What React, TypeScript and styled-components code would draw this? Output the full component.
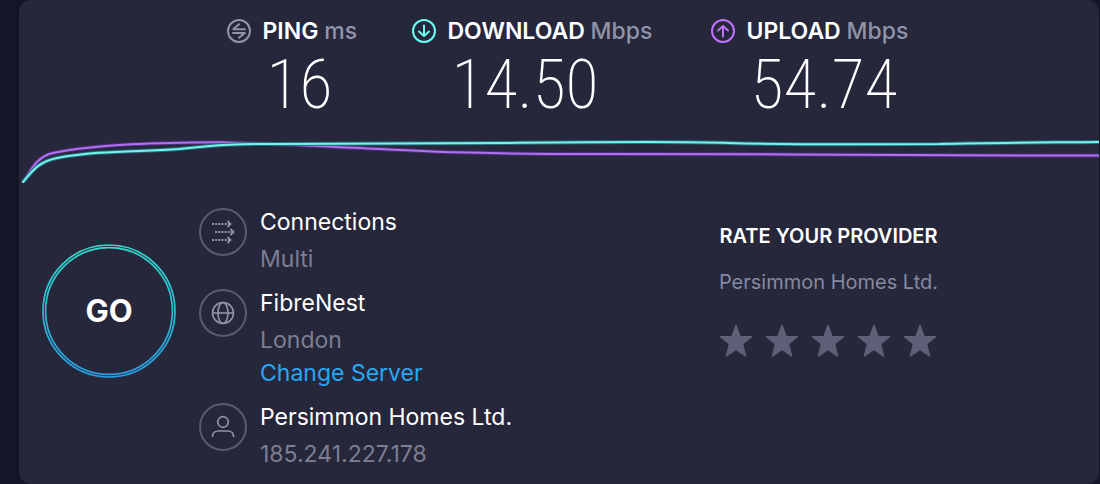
import React from 'react';
import styled, { createGlobalStyle } from 'styled-components';

const GlobalStyle = createGlobalStyle`
  * { box-sizing: border-box; }
  body {
    margin: 0;
    background: #141526;
    font-family: Inter, "Liberation Sans", sans-serif;
    color: #ffffff;
  }
`;

const Page = styled.main`
  min-height: 100vh;
  display: flex;
  padding: 0 1px 0 19px;
`;

const Card = styled.section`
  flex: 1;
  min-width: 0;
  background: #26273b;
  border-radius: 12px;
`;

const Metrics = styled.div`
  display: grid;
  grid-template-columns: 185px 299px 200px;
  justify-content: center;
  padding: 16px 0 0 19px;
`;

const Metric = styled.div`
  display: grid;
  grid-template-columns: 24px auto;
  justify-content: start;
  align-items: center;
  column-gap: 12px;
`;

const MetricLabel = styled.h2`
  margin: 0;
  font-size: 23px;
  line-height: 30px;
  font-weight: 600;
  white-space: nowrap;
`;

const Unit = styled.span`
  color: #9193a8;
  font-weight: 500;
`;

const MetricValue = styled.div`
  grid-column: 2;
  padding-left: 4px;
  font-family: "Roboto Condensed", Roboto, sans-serif;
  font-size: 68px;
  line-height: 78px;
  font-weight: 200;
`;

const Chart = styled.svg`
  display: block;
  width: 100%;
  height: 60px;
`;

const Details = styled.div`
  display: grid;
  grid-template-columns: 134px 376px 1fr;
  padding: 24px 20px 16px 23px;
  column-gap: 23px;
`;

const GoButton = styled.button`
  display: grid;
  place-items: center;
  width: 134px;
  height: 134px;
  margin-top: 36px;
  padding: 0;
  border: 0;
  border-radius: 50%;
  background: none;
  color: #ffffff;
  font: 700 31px/36px Inter, sans-serif;
  cursor: pointer;

  > * { grid-area: 1 / 1; }
`;

const InfoList = styled.div`
  display: flex;
  flex-direction: column;
  gap: 16px;
`;

const InfoItem = styled.div`
  display: flex;
  gap: 13px;
`;

const InfoIcon = styled.svg`
  flex: none;
  width: 48px;
  height: 48px;
  fill: none;
  stroke: #9193a8;
`;

const InfoText = styled.div`
  font-size: 23px;
  line-height: 28px;
`;

const InfoTitle = styled.div``;

const InfoSub = styled.div`
  margin-top: 9px;
  color: #7d7e93;
`;

const ServerLink = styled.a`
  display: block;
  margin-top: 5px;
  color: #26a8f5;
  text-decoration: none;
`;

const Rating = styled.fieldset`
  justify-self: center;
  margin: 0 20px 0 0;
  padding: 16px 0 0;
  border: 0;
  text-align: center;
`;

const RatingTitle = styled.h3`
  margin: 0;
  font-size: 20px;
  line-height: 24px;
  font-weight: 600;
`;

const Provider = styled.p`
  margin: 22px 0 0;
  font-size: 20px;
  line-height: 24px;
  color: #8789a0;
`;

const Stars = styled.div`
  display: flex;
  justify-content: center;
  gap: 12px;
  margin-top: 30px;
`;

const Star = styled.button`
  width: 34px;
  height: 34px;
  padding: 0;
  border: 0;
  background: none;
  cursor: pointer;

  svg { display: block; }
`;

type Kind = 'ping' | 'download' | 'upload';

const metricShape: Record<Kind, { color: string; path: string }> = {
  ping: { color: '#9193a8', path: 'M12 5.2 L6.2 10.2 H18 M6 14 H17.8 L12 18.800' },
  download: { color: '#6afff3', path: 'M12 6.5 V17 M7 12.5 L12 17 L17 12.5' },
  upload: { color: '#bf71ff', path: 'M12 17.5 V7 M7 11.5 L12 7 L17 11.5' },
};

const MetricIcon = ({ kind }: { kind: Kind }) => (
  <svg width="24" height="24" viewBox="0 0 24 24" fill="none" stroke={metricShape[kind].color} strokeWidth="2" strokeLinejoin="round" strokeLinecap="round" aria-hidden="true">
    <circle cx="12" cy="12" r="11" />
    <path d={metricShape[kind].path} />
  </svg>
);

const metrics: { kind: Kind; label: string; unit: string; value: string }[] = [
  { kind: 'ping', label: 'PING', unit: 'ms', value: '16' },
  { kind: 'download', label: 'DOWNLOAD', unit: 'Mbps', value: '14.50' },
  { kind: 'upload', label: 'UPLOAD', unit: 'Mbps', value: '54.74' },
];

const uploadLine =
  'M4 58 C11 49 16 33 34 29 C80 20 140 18.5 200 18.2 C250 19 300 22.5 361 25 C400 27 420 28 436 28.3 C500 30 540 30 580 30 C700 30.3 900 30.5 1000 31.5 L1080 31.5';
const downloadLine =
  'M4 58 C12 49 18 38 38 34 C80 26 120 28 160 25 C200 21 220 19.5 260 20 C340 19 420 19.5 480 19 C580 18 660 17 710 19 C780 21 850 20 920 20 C980 18.5 1040 18.5 1080 18';

const Ring = () => (
  <circle cx="24" cy="24" r="23" stroke="#5a5b70" strokeWidth="2" />
);

export default function App() {
  return (
    <>
      <GlobalStyle />
      <Page>
        <Card>
          <Metrics>
            {metrics.map((m) => (
              <Metric key={m.kind}>
                <MetricIcon kind={m.kind} />
                <MetricLabel>
                  {m.label} <Unit>{m.unit}</Unit>
                </MetricLabel>
                <MetricValue>{m.value}</MetricValue>
              </Metric>
            ))}
          </Metrics>

          <Chart viewBox="0 0 1080 60" preserveAspectRatio="none" fill="none" aria-hidden="true">
            <path d={uploadLine} stroke="#4b2f78" strokeWidth="4" />
            <path d={uploadLine} stroke="#b070f0" strokeWidth="2" />
            <path d={downloadLine} stroke="#2a6a78" strokeWidth="4" />
            <path d={downloadLine} stroke="#72f5ee" strokeWidth="2" strokeLinecap="round" />
          </Chart>

          <Details>
            <GoButton type="button">
              <svg width="134" height="134" viewBox="0 0 134 134" fill="none" aria-hidden="true">
                <defs>
                  <linearGradient id="ring" x1="0" y1="0" x2="0" y2="1">
                    <stop offset="0" stopColor="#32d8c8" />
                    <stop offset="1" stopColor="#2a9ade" />
                  </linearGradient>
                </defs>
                <circle cx="67" cy="67" r="66" stroke="url(#ring)" strokeWidth="1.7" />
                <circle cx="67" cy="67" r="63.4" stroke="url(#ring)" strokeWidth="1.7" />
              </svg>
              <span>GO</span>
            </GoButton>

            <InfoList>
              <InfoItem>
                <InfoIcon viewBox="0 0 48 48" aria-hidden="true">
                  <Ring />
                  <g strokeWidth="1.8">
                    <path d="M13 16 H31 M16 24 H34 M13 32 H31" strokeDasharray="2 1.2" />
                    <path d="M28.5 13 L31.5 16 L28.5 19 M31.5 21 L34.5 24 L31.5 27 M28.5 29 L31.5 32 L28.5 35" />
                  </g>
                </InfoIcon>
                <InfoText>
                  <InfoTitle>Connections</InfoTitle>
                  <InfoSub>Multi</InfoSub>
                </InfoText>
              </InfoItem>
              <InfoItem>
                <InfoIcon viewBox="0 0 48 48" aria-hidden="true">
                  <Ring />
                  <g strokeWidth="1.6">
                    <circle cx="24" cy="24" r="10.5" />
                    <ellipse cx="24" cy="24" rx="5" ry="10.5" />
                    <path d="M13.5 24 H34.5" />
                  </g>
                </InfoIcon>
                <InfoText>
                  <InfoTitle>FibreNest</InfoTitle>
                  <InfoSub>London</InfoSub>
                  <ServerLink href="#servers">Change Server</ServerLink>
                </InfoText>
              </InfoItem>
              <InfoItem>
                <InfoIcon viewBox="0 0 48 48" aria-hidden="true">
                  <Ring />
                  <g strokeWidth="1.7">
                    <circle cx="24" cy="19" r="5.3" />
                    <path d="M13.5 34 V33 C13.5 30 16 28 19.5 28 H28.5 C32 28 34.5 30 34.5 33 V34" />
                  </g>
                </InfoIcon>
                <InfoText>
                  <InfoTitle>Persimmon Homes Ltd.</InfoTitle>
                  <InfoSub>185.241.227.178</InfoSub>
                </InfoText>
              </InfoItem>
            </InfoList>

            <Rating>
              <RatingTitle>RATE YOUR PROVIDER</RatingTitle>
              <Provider>Persimmon Homes Ltd.</Provider>
              <Stars>
                {[1, 2, 3, 4, 5].map((n) => (
                  <Star key={n} type="button" aria-label={`${n} of 5`}>
                    <svg width="34" height="34" viewBox="0 0 34 34" fill="#5f6077" stroke="#5f6077" strokeWidth="1.5" strokeLinejoin="round" aria-hidden="true">
                      <path d="M17 1.5 L21 12.5 L32.5 12.7 L23.5 20 L26.5 32 L17 25.5 L7.5 32 L10.5 20 L1.5 12.7 L13 12.5 Z" />
                    </svg>
                  </Star>
                ))}
              </Stars>
            </Rating>
          </Details>
        </Card>
      </Page>
    </>
  );
}
